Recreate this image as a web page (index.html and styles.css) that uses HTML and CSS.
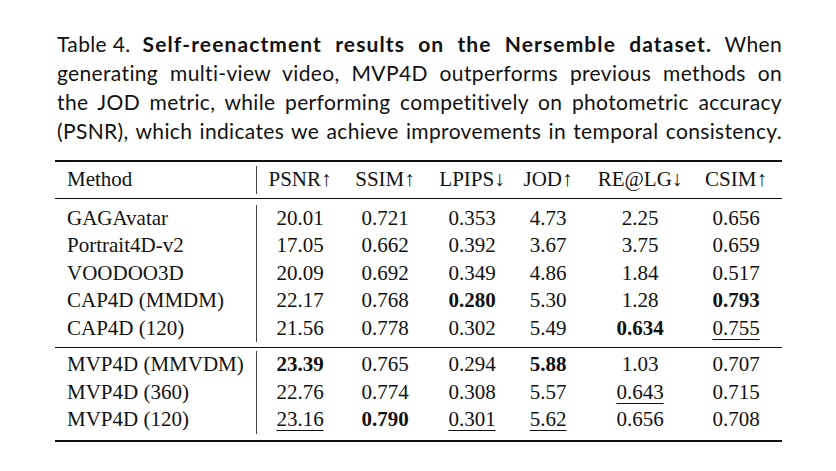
FILE: index.html
```html
<!DOCTYPE html>
<html>
<head>
<meta charset="utf-8">
<link rel="stylesheet" href="styles.css">
</head>
<body>
<div class="page">
  <p class="caption"><span class="label">Table 4.</span><b>Self-reenactment results on the Nersemble dataset.</b> When<br>generating multi-view video, MVP4D outperforms previous methods on<br>the JOD metric, while performing competitively on photometric accuracy<br>(PSNR), which indicates we achieve improvements in temporal consistency.</p>
  <div class="table">
    <div class="sec head">
      <div class="divider rows1"></div>
      <div class="m">Method</div>
      <div class="c">PSNR↑</div><div class="c">SSIM↑</div><div class="c">LPIPS↓</div><div class="c">JOD↑</div><div class="c">RE@LG↓</div><div class="c">CSIM↑</div>
    </div>
    <div class="sec body1">
      <div class="divider rows5"></div>
      <div class="m">GAGAvatar</div>
      <div class="c">20.01</div><div class="c">0.721</div><div class="c">0.353</div><div class="c">4.73</div><div class="c">2.25</div><div class="c">0.656</div>
      <div class="m">Portrait4D-v2</div>
      <div class="c">17.05</div><div class="c">0.662</div><div class="c">0.392</div><div class="c">3.67</div><div class="c">3.75</div><div class="c">0.659</div>
      <div class="m">VOODOO3D</div>
      <div class="c">20.09</div><div class="c">0.692</div><div class="c">0.349</div><div class="c">4.86</div><div class="c">1.84</div><div class="c">0.517</div>
      <div class="m">CAP4D (MMDM)</div>
      <div class="c">22.17</div><div class="c">0.768</div><div class="c"><b>0.280</b></div><div class="c">5.30</div><div class="c">1.28</div><div class="c"><b>0.793</b></div>
      <div class="m">CAP4D (120)</div>
      <div class="c">21.56</div><div class="c">0.778</div><div class="c">0.302</div><div class="c">5.49</div><div class="c"><b>0.634</b></div><div class="c"><u>0.755</u></div>
    </div>
    <div class="sec body2">
      <div class="divider rows3"></div>
      <div class="m">MVP4D (MMVDM)</div>
      <div class="c"><b>23.39</b></div><div class="c">0.765</div><div class="c">0.294</div><div class="c"><b>5.88</b></div><div class="c">1.03</div><div class="c">0.707</div>
      <div class="m">MVP4D (360)</div>
      <div class="c">22.76</div><div class="c">0.774</div><div class="c">0.308</div><div class="c">5.57</div><div class="c"><u>0.643</u></div><div class="c">0.715</div>
      <div class="m">MVP4D (120)</div>
      <div class="c"><u>23.16</u></div><div class="c"><b>0.790</b></div><div class="c"><u>0.301</u></div><div class="c"><u>5.62</u></div><div class="c">0.656</div><div class="c">0.708</div>
    </div>
  </div>
</div>
</body>
</html>
```
FILE: styles.css
```css
html, body {
  margin: 0;
  padding: 0;
  background: #fff;
}
.page {
  width: 727px;
  margin-left: 55px;
  padding-top: 29px;
  color: #111;
}
.caption {
  margin: 0 0 0 2px;
  font-family: Lato, "Open Sans", sans-serif;
  font-size: 21px;
  line-height: 29px;
  letter-spacing: 0.35px;
  text-align: justify;
  text-align-last: justify;
}
.caption .label {
  display: inline-block;
  margin-right: 12px;
}
.caption b {
  font-weight: 700;
  letter-spacing: 1.1px;
}
.table {
  margin-top: 15px;
  border-top: 2px solid #111;
  border-bottom: 2px solid #111;
  font-family: "Liberation Serif", "Times New Roman", serif;
  font-size: 21px;
  line-height: 27.5px;
}
.sec {
  display: grid;
  grid-template-columns: 201px 1px 86px 84px 90px 62px 122px 70px;
}
.head {
  padding: 4px 0 4px;
  border-bottom: 1px solid #111;
}
.body1 {
  padding: 6px 0 5px;
  border-bottom: 1px solid #111;
}
.body2 {
  padding: 3px 0 6px;
}
.divider {
  grid-column: 2;
  background: #444;
}
.rows1 { grid-row: 1 / span 1; }
.rows5 { grid-row: 1 / span 5; }
.rows3 { grid-row: 1 / span 3; }
.m {
  grid-column: 1;
  padding-left: 12px;
  white-space: nowrap;
}
.c {
  text-align: center;
  white-space: nowrap;
}
.c b {
  font-weight: 700;
}
.c u {
  text-decoration: underline;
  text-decoration-thickness: 1px;
  text-underline-offset: 4px;
}
```
